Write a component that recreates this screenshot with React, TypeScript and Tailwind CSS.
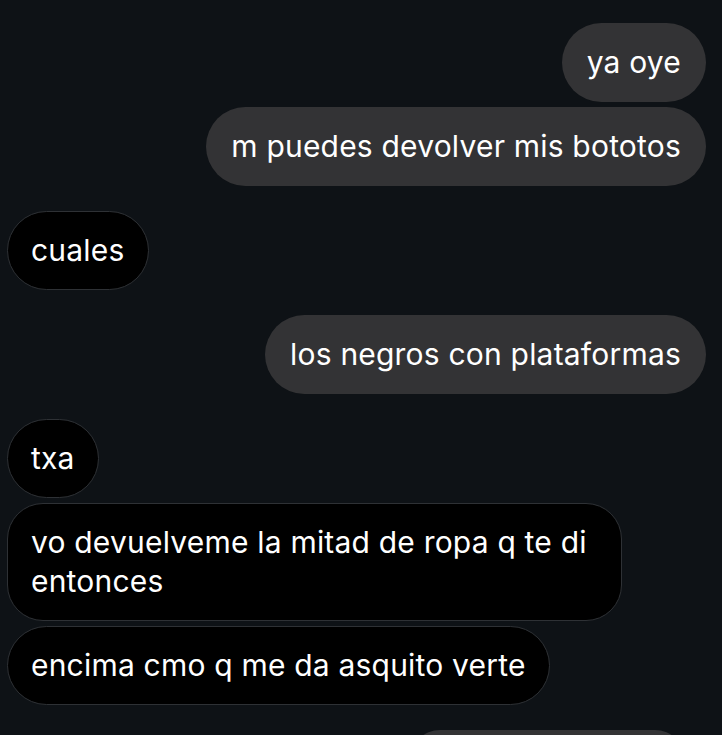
import React from "react";

type Msg = { me: boolean; text: React.ReactNode; gap: "s" | "l"; wide?: boolean };

const msgs: Msg[] = [
  { me: true, text: "ya oye", gap: "l" },
  { me: true, text: "m puedes devolver mis bototos", gap: "s" },
  { me: false, text: "cuales", gap: "l" },
  { me: true, text: "los negros con plataformas", gap: "l" },
  { me: false, text: "txa", gap: "l" },
  { me: false, text: <>vo devuelveme la mitad de ropa q te di<br />entonces</>, gap: "s", wide: true },
  { me: false, text: "encima cmo q me da asquito verte", gap: "s" },
];

export default function App() {
  return (
    <div
      className="w-[722px] h-[735px] overflow-hidden bg-[#0e1216] flex flex-col pt-[23px] pr-[16px] pl-[7px]"
      style={{ fontFamily: "Inter, 'Noto Sans', sans-serif" }}
    >
      {msgs.map((m, i) => (
        <div
          key={i}
          className={`flex ${m.me ? "justify-end" : "justify-start"} ${i === 0 ? "" : m.gap === "s" ? "mt-[5px]" : "mt-[25px]"}`}
        >
          {m.me ? (
            <div className="bg-[#333335] text-white rounded-[40px] px-[25px] py-[20px] text-[30px] leading-[39px] tracking-[0.2px]">
              {m.text}
            </div>
          ) : m.wide ? (
            <div className="w-[615px] bg-black border border-[#2e3135] text-white rounded-[36px] px-[23px] py-[19px] text-[30px] leading-[39px] tracking-[0.2px]">
              {m.text}
            </div>
          ) : (
            <div className="bg-black border border-[#2e3135] text-white rounded-[40px] px-[23px] py-[19px] text-[30px] leading-[39px] tracking-[0.2px]">
              {m.text}
            </div>
          )}
        </div>
      ))}
      <div className="flex justify-end mt-[25px] pr-[21px]">
        <div className="bg-[#333335] w-[275px] h-[60px] rounded-[40px]" />
      </div>
    </div>
  );
}
